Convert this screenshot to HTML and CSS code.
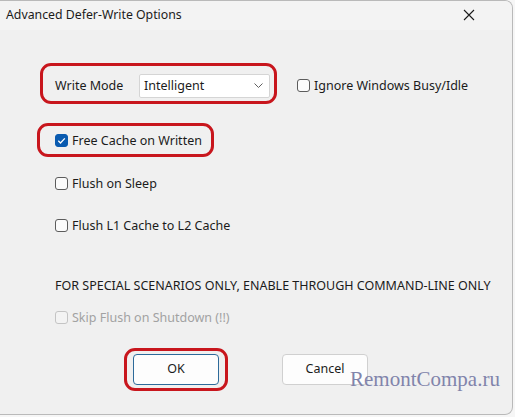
FILE: index.html
```html
<!DOCTYPE html>
<html>
<head>
<meta charset="utf-8">
<link rel="stylesheet" href="styles.css">
</head>
<body>
<div class="dialog">
  <div class="titlebar">
    <span class="title">Advanced Defer-Write Options</span>
    <svg class="close" width="12" height="12" viewBox="0 0 12 12"><path d="M1 1L11 11M11 1L1 11" stroke="#1a1a1a" stroke-width="1.1" fill="none"/></svg>
  </div>
  <div class="content">
    <div class="row row1">
      <div class="hl hl-mode">
        <span class="label">Write Mode</span>
        <div class="select">
          <span>Intelligent</span>
          <svg width="9" height="5" viewBox="0 0 9 5"><path d="M0.5 0.5L4.5 4.5L8.5 0.5" stroke="#606060" stroke-width="1" fill="none"/></svg>
        </div>
      </div>
      <label class="check ignore"><span class="box"></span><span>Ignore Windows Busy/Idle</span></label>
    </div>
    <div class="row row2">
      <div class="hl hl-free">
        <label class="check"><span class="box checked"><svg width="13" height="13" viewBox="0 0 13 13"><path d="M3.3 6.8L5.5 9L9.8 4.4" stroke="#fff" stroke-width="1.3" fill="none"/></svg></span><span>Free Cache on Written</span></label>
      </div>
    </div>
    <div class="row row3"><label class="check"><span class="box"></span><span>Flush on Sleep</span></label></div>
    <div class="row row4"><label class="check"><span class="box"></span><span>Flush L1 Cache to L2 Cache</span></label></div>
    <div class="row row5">FOR SPECIAL SCENARIOS ONLY, ENABLE THROUGH COMMAND-LINE ONLY</div>
    <div class="row row6"><label class="check disabled"><span class="box"></span><span>Skip Flush on Shutdown (!!)</span></label></div>
    <div class="row buttons">
      <div class="hl hl-ok"><button class="btn ok">OK</button></div>
      <button class="btn cancel">Cancel</button>
    </div>
  </div>
  <div class="watermark">RemontCompa.ru</div>
</div>
</body>
</html>
```

FILE: styles.css
```css
html, body {
  margin: 0;
  padding: 0;
  background: #f6f6f6;
}
.dialog {
  position: relative;
  width: 512px;
  height: 413px;
  background: #f0f0f0;
  border: 1px solid #b9b9b9;
  border-left: none;
  border-radius: 0 8px 8px 0;
  font-family: "Noto Sans", "Open Sans", sans-serif;
  font-size: 12.5px;
  color: #1b1b1b;
  overflow: hidden;
}
.titlebar {
  height: 29px;
  background: #f3f3f3;
  display: flex;
  align-items: center;
  justify-content: space-between;
  padding: 0 37px 0 6px;
}
.title {
  font-size: 12.3px;
  margin-top: -2px;
}
.close {
  margin-top: -2px;
}
.content {
  padding-left: 40px;
  display: flex;
  flex-direction: column;
  align-items: flex-start;
}
.row {
  display: flex;
  align-items: center;
}
.row1 {
  margin-top: 33px;
}
.hl {
  border: 3px solid #c8161d;
  border-radius: 11px;
  box-sizing: border-box;
  display: flex;
  align-items: center;
}
.hl-mode {
  width: 237px;
  height: 41px;
  padding: 4px 0 0 12px;
}
.label {
  width: 84px;
}
.select {
  width: 131px;
  height: 24px;
  box-sizing: border-box;
  background: #fff;
  border: 1px solid #d5d5d5;
  border-radius: 2px;
  display: flex;
  align-items: center;
  justify-content: space-between;
  padding: 0 6px 0 4px;
}
.check {
  display: flex;
  align-items: center;
  height: 20px;
}
.box {
  width: 13px;
  height: 13px;
  box-sizing: border-box;
  border: 1px solid #5c5c5c;
  border-radius: 3px;
  margin-right: 4px;
  background: #fbfbfb;
  display: block;
}
.box.checked {
  background: #0a5bb0;
  border-color: #0a5bb0;
}
.box.checked svg {
  display: block;
  margin: -1px 0 0 -1px;
}
.ignore {
  margin-left: 20px;
  margin-top: 4px;
}
.row2 {
  margin-top: 19px;
  margin-left: -3px;
}
.hl-free {
  width: 177px;
  height: 34px;
  padding-left: 15px;
}
.row3 {
  margin-top: 16px;
  margin-left: 15px;
}
.row4 {
  margin-top: 22px;
  margin-left: 15px;
}
.row5 {
  margin-top: 40px;
  margin-left: 15px;
  height: 20px;
}
.row6 {
  margin-top: 12px;
  margin-left: 15px;
}
.disabled {
  color: #a2a2a2;
}
.disabled .box {
  border-color: #c4c4c4;
  background: #f3f3f3;
}
.buttons {
  margin-top: 21px;
  margin-left: 84px;
}
.hl-ok {
  width: 104px;
  height: 43px;
  padding: 0 0 0 6px;
}
.btn {
  width: 86px;
  height: 31px;
  box-sizing: border-box;
  background: #fdfdfd;
  border-radius: 4px;
  font-family: "Noto Sans", "Open Sans", sans-serif;
  font-size: 12.5px;
  color: #1b1b1b;
  padding: 0 0 2px;
}
.ok {
  border: 1px solid #2d6a9a;
}
.cancel {
  margin-left: 54px;
  border: 1px solid #d0d0d0;
}
.watermark {
  position: absolute;
  left: 350px;
  top: 366px;
  font-family: "Liberation Serif", serif;
  font-size: 21px;
  color: #8184ab;
}
```
